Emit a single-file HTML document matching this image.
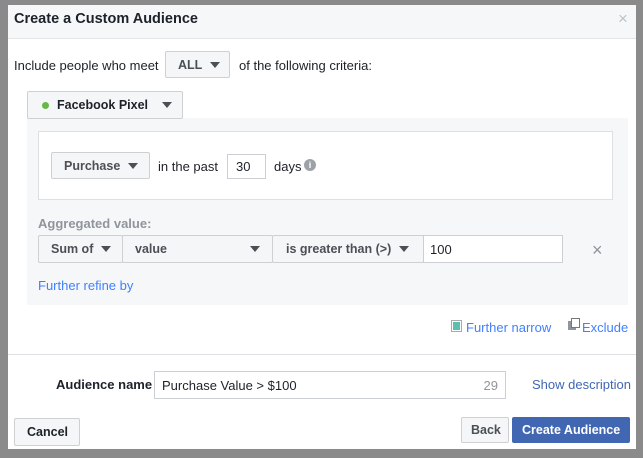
<!DOCTYPE html><html><head><style>
body{margin:0;width:643px;height:458px;background:#8a8a8a;font-family:"Liberation Sans",sans-serif;font-size:13px;color:#1d2129;position:relative;overflow:hidden}
.a{position:absolute}
.btn{position:absolute;background:#f5f6f7;border:1px solid #ced0d4;border-radius:2px;box-sizing:border-box;font-weight:bold;color:#4b4f56;display:flex;align-items:center;padding-left:12px;font-size:12.5px}
.tri{display:inline-block;width:0;height:0;border-left:5px solid transparent;border-right:5px solid transparent;border-top:6px solid #4b4f56;margin-left:8px}
.inp{position:absolute;background:#fff;border:1px solid #ccd0d5;box-sizing:border-box;display:flex;align-items:center;padding-left:6px}
.blue{color:#4267b2}
</style></head><body>
<div class="a" style="left:8px;top:5px;width:628px;height:444px;background:#fff"></div>
<div class="a" style="left:8px;top:5px;width:628px;height:33px;background:#f6f7f9;border-bottom:1px solid #e5e5e5"></div>
<div class="a" style="left:14px;top:11px;font-size:14.5px;font-weight:bold">Create a Custom Audience</div>
<div class="a" style="left:618px;top:9px;font-size:17px;color:#bec2c9">×</div>
<div class="a" style="left:14px;top:58px">Include people who meet</div>
<div class="btn" style="left:165px;top:51px;width:65px;height:27px">ALL<span class="tri"></span></div>
<div class="a" style="left:239px;top:58px">of the following criteria:</div>
<div class="a" style="left:27px;top:118px;width:601px;height:187px;background:#f6f7f9"></div>
<div class="btn" style="left:27px;top:91px;width:156px;height:28px;padding-left:14px"><span style="width:7px;height:7px;border-radius:50%;background:#69b74a;margin-right:8px"></span><span style="color:#1d2129">Facebook Pixel</span><span class="tri" style="margin-left:14px"></span></div>
<div class="a" style="left:38px;top:131px;width:575px;height:69px;background:#fff;border:1px solid #dddfe2;box-sizing:border-box"></div>
<div class="btn" style="left:51px;top:152px;width:99px;height:27px">Purchase<span class="tri"></span></div>
<div class="a" style="left:158px;top:159px">in the past</div>
<div class="inp" style="left:227px;top:154px;width:39px;height:25px;padding-left:8px">30</div>
<div class="a" style="left:274px;top:159px">days</div>
<div class="a" style="left:304px;top:159px;width:12px;height:12px;border-radius:50%;background:#9ea2a8;color:#fff;font-size:9px;font-weight:bold;text-align:center;line-height:12px">i</div>
<div class="a" style="left:38px;top:216px;color:#90949c;font-weight:bold">Aggregated value:</div>
<div class="btn" style="left:38px;top:235px;width:85px;height:28px">Sum of<span class="tri"></span></div>
<div class="btn" style="left:122px;top:235px;width:151px;height:28px">value<span class="tri" style="margin-left:auto;margin-right:12px"></span></div>
<div class="btn" style="left:272px;top:235px;width:152px;height:28px;padding-left:13px">is greater than (&gt;)<span class="tri"></span></div>
<div class="inp" style="left:423px;top:235px;width:140px;height:28px;padding-left:6px">100</div>
<div class="a" style="left:592px;top:240px;font-size:18px;color:#90949c">×</div>
<div class="a blue" style="left:38px;top:278px;color:#4080ff">Further refine by</div>
<div class="a" style="left:451px;top:320px;width:9px;height:10px;border:1px solid #aaa;background:#fff"></div>
<div class="a" style="left:453px;top:322px;width:7px;height:8px;background:#5cbfb0"></div>
<div class="a blue" style="left:466px;top:320px;color:#4080ff">Further narrow</div>
<div class="a" style="left:568px;top:321px;width:8px;height:9px;background:#90949c"></div>
<div class="a" style="left:571px;top:318px;width:7px;height:8px;border:1px solid #777;background:#fff"></div>
<div class="a blue" style="left:582px;top:320px;color:#4080ff">Exclude</div>
<div class="a" style="left:8px;top:354px;width:628px;height:1px;background:#dddfe2"></div>
<div class="a" style="left:56px;top:377px;font-weight:bold">Audience name</div>
<div class="inp" style="left:154px;top:371px;width:352px;height:28px;padding-left:7px">Purchase Value &gt; $100<span style="margin-left:auto;margin-right:7px;color:#90949c">29</span></div>
<div class="a blue" style="left:532px;top:377px">Show description</div>
<div class="btn" style="left:14px;top:418px;width:66px;height:28px;color:#1d2129">Cancel</div>
<div class="btn" style="left:461px;top:417px;width:48px;height:26px;padding-left:9px">Back</div>
<div class="btn" style="left:512px;top:417px;width:118px;height:26px;background:#4267b2;border-color:#4267b2;color:#fff;padding-left:9px">Create Audience</div>
</body></html>
